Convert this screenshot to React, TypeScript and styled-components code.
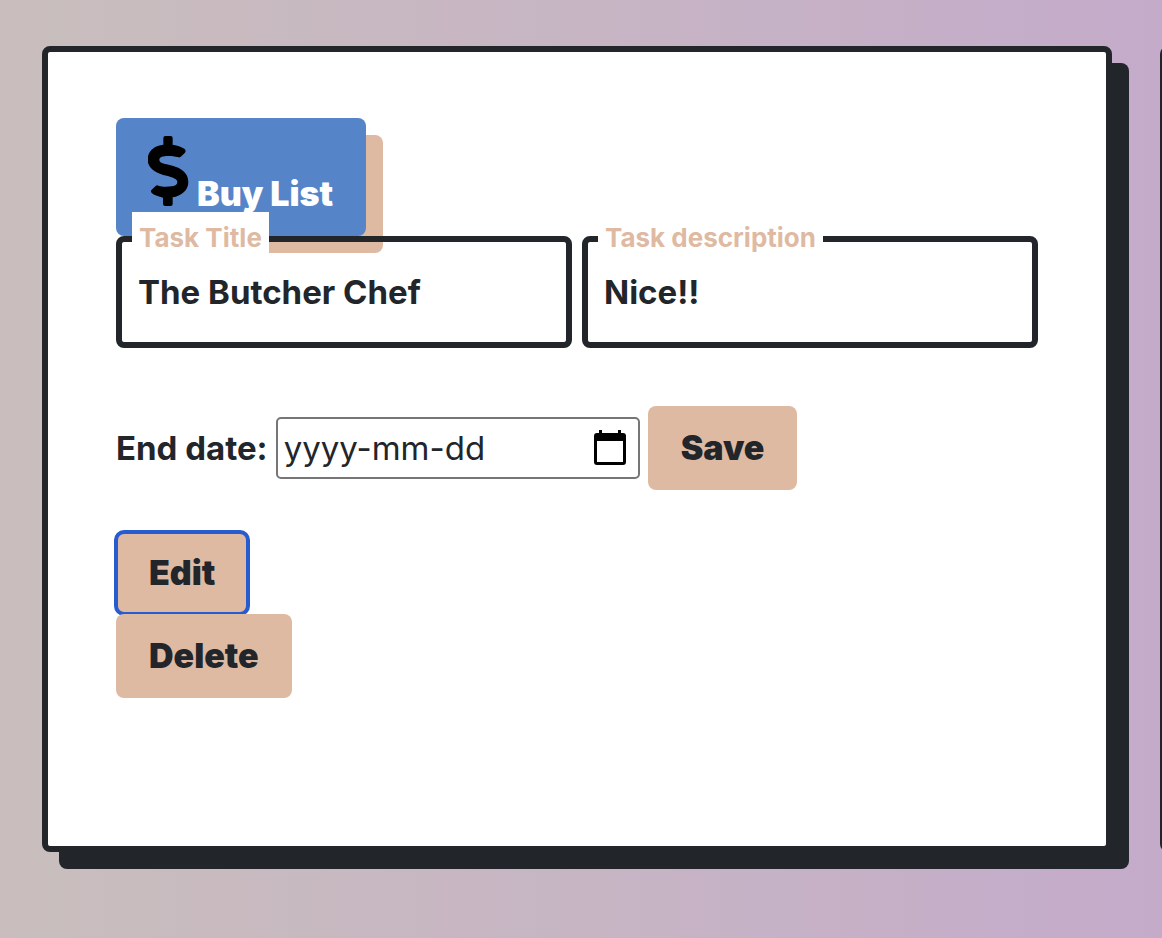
import React from "react";
import styled, { createGlobalStyle } from "styled-components";

const ink = "#22262a";
const peach = "#dfbaa3";
const blue = "#5585c8";

const GlobalStyle = createGlobalStyle`
  *, *::before, *::after { box-sizing: border-box; }
  html, body, #root { min-height: 100vh; }
  body {
    margin: 0;
    color: ${ink};
    font: 700 33px/48px Inter, "Noto Sans", sans-serif;
    overflow-x: hidden;
  }
`;

const Board = styled.main`
  display: flex;
  gap: 48px;
  min-height: 100vh;
  padding: 46px 50px 86px 42px;
  overflow: hidden;
  background: linear-gradient(to right, #c9bebd, #c4abca);
`;

const Card = styled.section`
  flex: 0 0 100%;
  padding: 66px 68px;
  background: #fff;
  border: 6px solid ${ink};
  border-radius: 8px;
  box-shadow: 17px 17px 0 ${ink};
`;

const Badge = styled.h2`
  display: flex;
  align-items: flex-end;
  gap: 8px;
  width: fit-content;
  height: 118px;
  margin: 0;
  padding: 16px 33px 18px 32px;
  border-radius: 8px;
  background: ${blue};
  box-shadow: 17px 17px 0 ${peach};
  color: #fff;
  font-size: 34px;
  font-weight: 900;
`;

const DollarIcon = styled.svg`
  width: 41px;
  height: 72px;
  align-self: flex-start;
`;

const Fields = styled.div`
  display: flex;
  gap: 10px;
  margin-bottom: 58px;
`;

const Field = styled.div`
  position: relative;
  flex: 1 1 0;
`;

const FieldLabel = styled.label`
  position: absolute;
  top: -24px;
  left: 16px;
  padding: 0 7px;
  background: #fff;
  color: ${peach};
  font-size: 26px;
  line-height: 52px;
`;

const FieldInput = styled.input`
  display: block;
  width: 100%;
  height: 112px;
  padding: 0 16px;
  border: 6px solid ${ink};
  border-radius: 8px;
  background: transparent;
  color: inherit;
  font: inherit;
`;

const DateRow = styled.div`
  display: flex;
  align-items: center;
  gap: 8px;
  margin-bottom: 42px;
`;

const DateBox = styled.div`
  display: flex;
  align-items: center;
  width: 364px;
  height: 62px;
  padding: 0 12px 0 6px;
  border: 2px solid #767676;
  border-radius: 5px;
`;

const DateInput = styled.input`
  flex: 1;
  min-width: 0;
  padding: 0;
  border: 0;
  outline: 0;
  background: transparent;
  color: inherit;
  font: inherit;
  font-weight: 400;
  &::placeholder { color: ${ink}; opacity: 1; }
`;

const PickerButton = styled.button`
  display: flex;
  padding: 0;
  border: 0;
  background: none;
`;

const Button = styled.button<{ $active?: boolean }>`
  height: ${(p) => (p.$active ? "82px" : "84px")};
  padding: 0 33px;
  border: 0;
  border-radius: 8px;
  background: ${peach};
  color: ${ink};
  font: inherit;
  font-size: 34px;
  font-weight: 900;
  outline: ${(p) => (p.$active ? "4px solid #285bd0" : "0")};
  outline-offset: -2px;
`;

const Actions = styled.div`
  display: flex;
  flex-direction: column;
  align-items: flex-start;
  & > :last-child { position: relative; }
`;

export default function App() {
  return (
    <>
      <GlobalStyle />
      <Board>
        <Card>
          <Badge>
            <DollarIcon viewBox="24 12 123 216" aria-hidden="true">
              <path d="M76 18H92Q98 18 98 24V44C114 46 126 51 134 57Q139 62 135 68L124 79Q120 84 113 81C96 77 58 74 58 89C58 98 70 101 86 104C116 111 145 123 145 156C145 181 124 198 98 202V222Q98 228 92 228H76Q69 228 69 222V203C56 200 44 196 36 190Q30 184 35 179L47 168Q51 164 57 168C66 171 84 171 95 169C108 167 112 162 112 156C112 145 96 142 80 137C48 130 23 116 23 88C23 64 42 47 70 44V24Q70 18 76 18Z" />
            </DollarIcon>
            Buy List
          </Badge>
          <Fields>
            <Field>
              <FieldInput id="title" defaultValue="The Butcher Chef" />
              <FieldLabel htmlFor="title">Task Title</FieldLabel>
            </Field>
            <Field>
              <FieldInput id="description" defaultValue="Nice!!" />
              <FieldLabel htmlFor="description">Task description</FieldLabel>
            </Field>
          </Fields>
          <DateRow>
            <label htmlFor="end-date">End date:</label>
            <DateBox>
              <DateInput id="end-date" placeholder="yyyy-mm-dd" />
              <PickerButton type="button" aria-label="Choose date">
                <svg width="32" height="36" viewBox="0 0 32 36">
                  <path
                    fillRule="evenodd"
                    d="M5 0h3v3h16V0h3v3h2a3 3 0 0 1 3 3v26a3 3 0 0 1-3 3H3a3 3 0 0 1-3-3V6a3 3 0 0 1 3-3h2zM3 11v21h26V11z"
                  />
                </svg>
              </PickerButton>
            </DateBox>
            <Button type="button">Save</Button>
          </DateRow>
          <Actions>
            <Button type="button" $active>Edit</Button>
            <Button type="button">Delete</Button>
          </Actions>
        </Card>
        <Card />
      </Board>
    </>
  );
}
